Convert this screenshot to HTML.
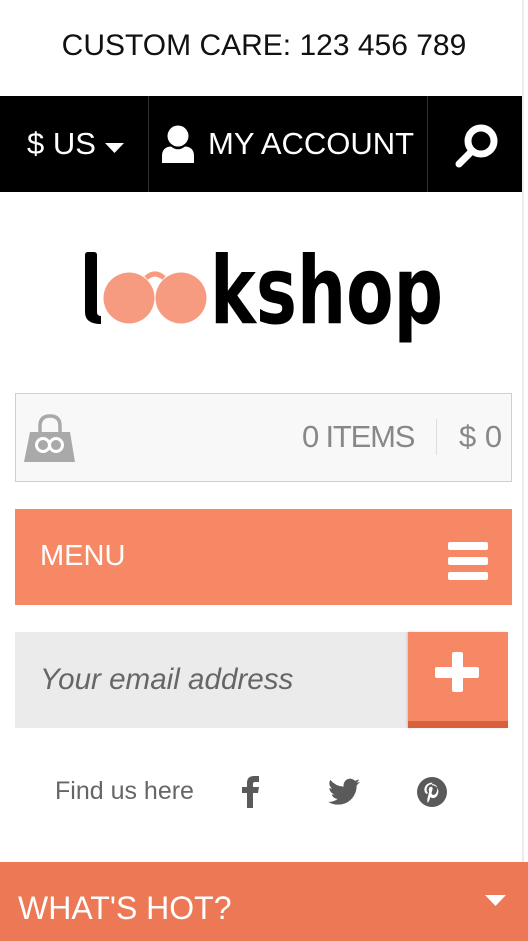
<!DOCTYPE html>
<html><head><meta charset="utf-8"><style>
*{margin:0;padding:0;box-sizing:border-box}
body{width:528px;height:941px;background:#fff;font-family:"Liberation Sans",Arial,sans-serif;position:relative;overflow:hidden}
.a{position:absolute}
</style></head><body>
<div class="a" style="left:0;top:27px;width:528px;text-align:center;font-size:30px;line-height:38px;color:#111">CUSTOM CARE: 123 456 789</div>
<div class="a" style="left:0;top:96px;width:522px;height:96px;background:#000"></div>
<div class="a" style="left:148px;top:96px;width:1px;height:96px;background:#333"></div>
<div class="a" style="left:427px;top:96px;width:1px;height:96px;background:#333"></div>
<div class="a" style="left:522px;top:0;width:2px;height:862px;background:#ececec"></div>
<div class="a" style="left:27px;top:126px;font-size:31px;line-height:36px;color:#fff">$ US</div>
<svg class="a" style="left:105px;top:143px" width="20" height="12"><path d="M0 0H19L9.5 10Z" fill="#fff"/></svg>
<svg class="a" style="left:160px;top:122px" width="40" height="44"><circle cx="18" cy="14" r="10.5" fill="#fff"/><path d="M2 41V34Q2 25 11 24.5Q18 30 25 24.5Q34 25 34 34V41Z" fill="#fff"/></svg>
<div class="a" style="left:208px;top:126px;font-size:31px;line-height:36px;color:#fff">MY ACCOUNT</div>
<svg class="a" style="left:454px;top:122px" width="46" height="46"><circle cx="27" cy="19" r="13" fill="none" stroke="#fff" stroke-width="7"/><path d="M17 30L5 42" stroke="#fff" stroke-width="7" stroke-linecap="round"/></svg>
<svg class="a" style="left:80px;top:240px" width="370" height="110">
<path d="M5 15Q5 12 8 12H14Q17 12 17 15V72Q17 76 21 76V84Q5 84 5 72Z" fill="#000"/>
<circle cx="49" cy="58" r="25.5" fill="#f79b80"/><circle cx="101" cy="58" r="25.5" fill="#f79b80"/>
<path d="M66 38Q75 30 84 38" stroke="#f79b80" stroke-width="5" fill="none"/>
<text x="130" y="83" font-family="DejaVu Sans,sans-serif" font-weight="bold" font-size="94" textLength="233" lengthAdjust="spacingAndGlyphs" fill="#000">kshop</text>
</svg>
<div class="a" style="left:15px;top:393px;width:497px;height:89px;background:#f8f8f8;border:1px solid #cfcfcf"></div>
<svg class="a" style="left:22px;top:410px" width="56" height="56"><path d="M18 22V16Q18 6 28 6Q38 6 38 16V22" stroke="#a9a9a9" stroke-width="3.5" fill="none"/><path d="M8 22H48L53 52H2Z" fill="#a9a9a9"/><circle cx="21" cy="35" r="6.5" stroke="#fff" stroke-width="3" fill="none"/><circle cx="34" cy="35" r="6.5" stroke="#fff" stroke-width="3" fill="none"/></svg>
<div class="a" style="left:302px;top:419px;font-size:31px;line-height:36px;color:#888;letter-spacing:-1.2px">0 ITEMS</div>
<div class="a" style="left:436px;top:419px;width:1px;height:36px;background:#ddd"></div>
<div class="a" style="left:459px;top:419px;font-size:31px;line-height:36px;color:#888">$ 0</div>
<div class="a" style="left:15px;top:509px;width:497px;height:96px;background:#f78865"></div>
<div class="a" style="left:40px;top:539px;font-size:29px;line-height:34px;color:#fff">MENU</div>
<div class="a" style="left:448px;top:542px;width:40px;height:8px;border-radius:2px;background:#fff"></div>
<div class="a" style="left:448px;top:557px;width:40px;height:8px;border-radius:2px;background:#fff"></div>
<div class="a" style="left:448px;top:572px;width:40px;height:8px;border-radius:2px;background:#fff"></div>
<div class="a" style="left:15px;top:632px;width:396px;height:96px;background:#ebebeb"></div>
<div class="a" style="left:40px;top:663px;font-size:29.6px;line-height:34px;color:#666;font-style:italic">Your email address</div>
<div class="a" style="left:408px;top:632px;width:100px;height:96px;background:#f78865;border-bottom:7px solid #d9603d;box-shadow:-1px 0 2px rgba(0,0,0,.15)"></div>
<div class="a" style="left:435px;top:667px;width:44px;height:11px;border-radius:2px;background:#fff"></div>
<div class="a" style="left:452px;top:652px;width:11px;height:40px;border-radius:2px;background:#fff"></div>
<div class="a" style="left:55px;top:777px;font-size:25px;line-height:28px;color:#666">Find us here</div>
<svg class="a" style="left:240px;top:775px" width="22" height="34"><path d="M7 33V18H2V12H7V8Q7 1 14 1H19V7H15Q13 7 13 9V12H19L18 18H13V33Z" fill="#5a5a5a"/></svg>
<svg class="a" style="left:328px;top:778px" width="32" height="28" viewBox="0 0 24 20"><path d="M24 2.4a10 10 0 0 1-2.8.8A5 5 0 0 0 23.3.4a10 10 0 0 1-3.1 1.2A4.9 4.9 0 0 0 11.8 6 14 14 0 0 1 1.7.9a4.9 4.9 0 0 0 1.5 6.6A4.9 4.9 0 0 1 1 6.9a4.9 4.9 0 0 0 3.9 4.8 4.9 4.9 0 0 1-2.2.1 4.9 4.9 0 0 0 4.6 3.4A9.9 9.9 0 0 1 0 17.3 14 14 0 0 0 7.5 19.5c9 0 14-7.5 14-14v-.6A10 10 0 0 0 24 2.4z" fill="#5a5a5a"/></svg>
<svg class="a" style="left:417px;top:777px" width="30" height="30" viewBox="0 0 24 24"><circle cx="12" cy="12" r="12" fill="#5a5a5a"/><path d="M12.3 4.5c-4.3 0-6.4 3-6.4 5.6 0 1.6.6 2.9 1.9 3.4.2.1.4 0 .5-.2l.2-.8c.1-.2 0-.3-.2-.5-.4-.4-.6-1-.6-1.8 0-2.4 1.8-4.5 4.6-4.5 2.5 0 3.9 1.5 3.9 3.6 0 2.7-1.2 5-3 5-1 0-1.7-.8-1.5-1.8.3-1.2.8-2.4.8-3.3 0-.8-.4-1.4-1.3-1.4-1 0-1.8 1.1-1.8 2.5 0 .9.3 1.5.3 1.5l-1.3 5.3c-.3 1.4 0 3.2.1 3.4 0 .1.2.1.2 0 .1-.1 1-1.3 1.4-2.5l.6-2.1c.3.5 1.1 1 2 1 2.6 0 4.4-2.4 4.4-5.6 0-2.4-2.1-4.7-5.2-4.7z" fill="#fff"/></svg>
<div class="a" style="left:0;top:862px;width:528px;height:79px;background:#ec7855"></div>
<div class="a" style="left:18px;top:889px;font-size:32px;line-height:38px;color:#fff">WHAT'S HOT?</div>
<svg class="a" style="left:485px;top:895px" width="22" height="13"><path d="M0 0H21L10.5 11Z" fill="#fff"/></svg>
</body></html>
